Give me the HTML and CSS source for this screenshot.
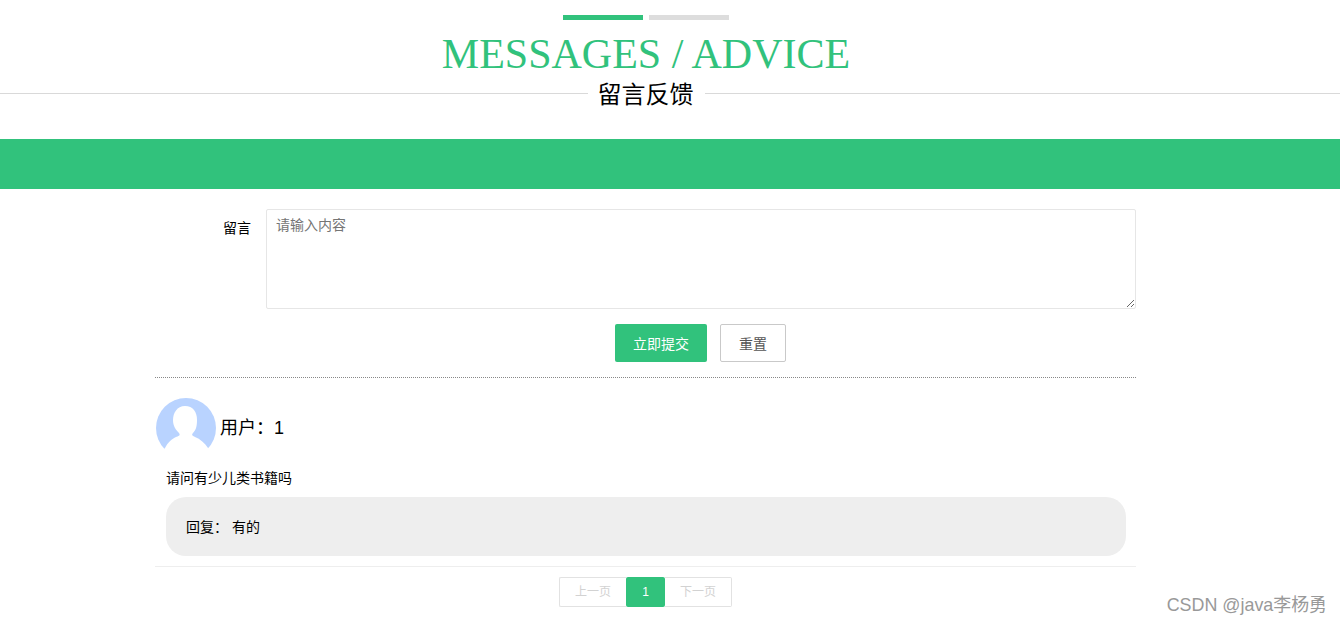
FILE: index.html
```html
<!DOCTYPE html>
<html lang="zh">

<head>
    <meta charset="UTF-8">
    <title>留言反馈</title>
    <link rel="stylesheet" href="styles.css">
</head>

<body>
    <div class="head">
        <div class="bars">
            <span class="bar bar-on"></span>
            <span class="bar"></span>
        </div>
        <h1 class="title">MESSAGES / ADVICE</h1>
        <div class="sub-line">
            <span class="sub">留言反馈</span>
        </div>
    </div>

    <div class="band"></div>

    <div class="main">
        <form class="form">
            <div class="form-item">
                <label class="form-label">留言</label>
                <textarea class="form-text" placeholder="请输入内容"></textarea>
            </div>
            <div class="form-btns">
                <button type="button" class="btn btn-on">立即提交</button>
                <button type="reset" class="btn">重置</button>
            </div>
        </form>

        <div class="msg">
            <div class="msg-user">
                <svg class="avatar" width="60" height="60" viewBox="0 0 60 60">
                    <circle cx="30" cy="30" r="30" fill="#b9d3ff"></circle>
                    <path fill="#fff" d="M29 8C21 8 17 15 17 22C17 28 20 32 23 35C25 38 22 38 20 39C16 41 12 44 9 50L0 60L60 60L52 50C49 45 44 41 39 39C37 38 35 37 37 35C40 32 41 28 41 22C41 14 37 8 29 8Z"></path>
                </svg>
                <span class="msg-name">用户：1</span>
            </div>
            <p class="msg-text">请问有少儿类书籍吗</p>
            <div class="reply">回复： 有的</div>
        </div>

        <div class="pages">
            <a class="page page-off page-prev">上一页</a>
            <a class="page page-on">1</a>
            <a class="page page-off page-next">下一页</a>
        </div>
    </div>

    <div class="mark">CSDN @java李杨勇</div>
</body>

</html>
```

FILE: styles.css
```css
* {
    box-sizing: border-box;
}

html,
body {
    height: 100%;
    overflow: hidden;
}

body {
    margin: 0;
    background: #fff;
    color: #000;
    font-family: "Liberation Sans", "Noto Sans CJK SC", sans-serif;
    font-size: 14px;
}

.bars {
    display: flex;
    justify-content: center;
    gap: 6px;
    padding: 15px 48px 0 0;
}

.bar {
    width: 80px;
    height: 5px;
    background: #ddd;
}

.bar-on {
    background: #31c27c;
}

.title {
    margin: 10px 48px 0 0;
    color: #31c27c;
    font-family: "Liberation Serif", "Noto Sans CJK SC", serif;
    font-size: 42px;
    font-weight: 400;
    line-height: 48px;
    text-align: center;
}

.sub-line {
    display: flex;
    align-items: flex-start;
    justify-content: center;
    height: 39px;
    padding-right: 48px;
    background: linear-gradient(#d9d9d9, #d9d9d9) 0 15px / 100% 1px no-repeat;
}

.sub {
    padding: 2px 11px 0 10px;
    background: #fff;
    font-size: 24px;
    line-height: 30px;
}

.band {
    height: 50px;
    margin-top: 22px;
    background: #31c27c;
}

.main {
    width: 981px;
    margin-left: 155px;
}

.form {
    padding-top: 20px;
    border-bottom: 1px dotted #888;
    height: 189px;
}

.form-item {
    display: flex;
}

.form-label {
    width: 96px;
    padding-top: 9px;
    font-size: 14px;
    line-height: 20px;
    text-align: right;
}

.form-text {
    display: block;
    width: 870px;
    height: 100px;
    margin-left: 15px;
    padding: 5px 9px;
    border: 1px solid #e6e6e6;
    border-radius: 2px;
    outline: none;
    font-family: inherit;
    font-size: 14px;
    line-height: 20px;
}

.form-text::placeholder {
    color: #757575;
}

.form-btns {
    display: flex;
    gap: 13px;
    padding: 15px 0 0 460px;
}

.btn {
    width: 66px;
    height: 38px;
    padding: 0;
    border: 1px solid #c9c9c9;
    border-radius: 2px;
    background: #fff;
    color: #555;
    font-family: inherit;
    font-size: 14px;
}

.btn-on {
    width: 92px;
    border: 0;
    background: #31c27c;
    color: #fff;
}

.msg {
    height: 189px;
    padding: 20px 10px 0 11px;
    border-bottom: 1px solid #eee;
}

.msg-user {
    display: flex;
    align-items: center;
    margin-left: -10px;
}

.avatar {
    display: block;
    flex: none;
}

.msg-name {
    margin-left: 4px;
    font-size: 18px;
    line-height: 24px;
}

.msg-text {
    margin: 10px 0 0;
    line-height: 20px;
}

.reply {
    height: 59px;
    margin-top: 9px;
    padding-left: 20px;
    border-radius: 20px;
    background: #eee;
    line-height: 60px;
    white-space: pre-wrap;
}

.pages {
    display: flex;
    justify-content: center;
    padding-top: 10px;
}

.page {
    height: 30px;
    padding: 0 15px;
    border: 1px solid #e2e2e2;
    background: #fff;
    font-size: 12px;
    line-height: 28px;
}

.page-off {
    color: #d2d2d2;
}

.page-prev {
    border-right: 0;
    border-radius: 2px 0 0 2px;
}

.page-next {
    border-left: 0;
    border-radius: 0 2px 2px 0;
}

.page-on {
    width: 39px;
    padding: 0;
    border: 0;
    border-radius: 2px;
    background: #31c27c;
    color: #fff;
    line-height: 30px;
    text-align: center;
}

.mark {
    position: absolute;
    right: 13px;
    top: 593px;
    color: #999;
    font-size: 17.9px;
    line-height: 24px;
}
```
